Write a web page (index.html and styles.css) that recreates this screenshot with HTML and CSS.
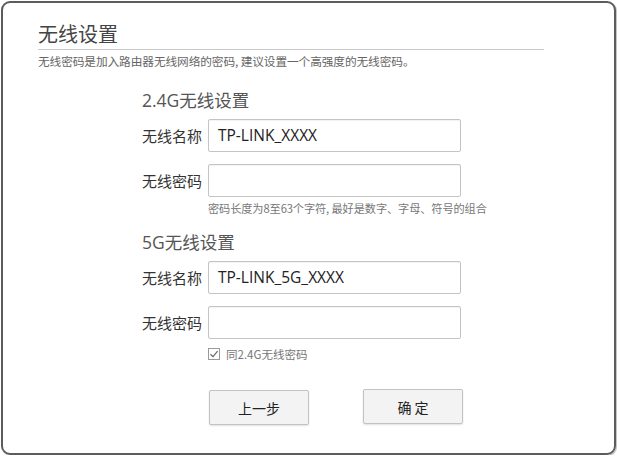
FILE: index.html
```html
<!DOCTYPE html>
<html lang="zh-CN">
<head>
<meta charset="utf-8">
<title>无线设置</title>
<link rel="stylesheet" href="styles.css">
</head>
<body>
<div class="frame">
  <div class="header">
    <h1 class="title">无线设置</h1>
    <p class="desc">无线密码是加入路由器无线网络的密码, 建议设置一个高强度的无线密码。</p>
  </div>
  <div class="form">
    <h2 class="section">2.4G无线设置</h2>
    <div class="row">
      <label class="label">无线名称</label>
      <div class="input">TP-LINK_XXXX</div>
    </div>
    <div class="row">
      <label class="label">无线密码</label>
      <div class="input"></div>
    </div>
    <p class="hint">密码长度为8至63个字符, 最好是数字、字母、符号的组合</p>

    <h2 class="section s5">5G无线设置</h2>
    <div class="row">
      <label class="label">无线名称</label>
      <div class="input">TP-LINK_5G_XXXX</div>
    </div>
    <div class="row">
      <label class="label">无线密码</label>
      <div class="input"></div>
    </div>
    <div class="check">
      <span class="box"><svg width="10" height="10" viewBox="0 0 10 10"><path d="M1.5 5.2 L4 7.6 L8.6 2.2" fill="none" stroke="#666" stroke-width="1.2"/></svg></span>
      <span class="check-text">同2.4G无线密码</span>
    </div>
    <div class="buttons">
      <button class="btn">上一步</button>
      <button class="btn ok">确 定</button>
    </div>
  </div>
</div>
</body>
</html>
```
FILE: styles.css
```css
* { box-sizing: border-box; }
html, body { margin: 0; padding: 0; background: #fff; }
body {
  font-family: "Noto Sans CJK SC", "Noto Sans", sans-serif;
  color: #333;
}
.frame {
  margin: 1px 1px 0 1px;
  width: 615px;
  height: 454px;
  border: 2px solid #5c5c5c;
  border-radius: 9px;
  box-shadow: 1px 1px 1px rgba(0,0,0,0.25);
  padding: 0;
}
.header {
  padding: 18px 0 0 35px;
  width: 541px;
}
.title {
  margin: 0;
  font-size: 20px;
  font-weight: normal;
  color: #444;
  line-height: 26px;
  padding-bottom: 2px;
  border-bottom: 1px solid #c8c8c8;
}
.desc {
  margin: 4px 0 0 0;
  font-size: 11.7px;
  line-height: 14px;
  color: #666;
  letter-spacing: -0.1px;
}
.form {
  padding-left: 139px;
}
.section {
  margin: 21px 0 0 0;
  font-size: 17.5px;
  font-weight: normal;
  color: #555;
  line-height: 22px;
  font-family: "Open Sans", "Noto Sans CJK SC", sans-serif;
}
.section.s5 { margin-top: 16px; }
.row {
  display: flex;
  align-items: center;
  margin-top: 8px;
}
.row + .row { margin-top: 12px; }
.label {
  width: 66px;
  font-size: 15px;
  color: #333;
}
.input {
  width: 253px;
  height: 33px;
  border: 1px solid #c4c4c4;
  border-radius: 2px;
  box-shadow: inset 0 1px 1px rgba(0,0,0,0.05);
  padding: 0 9px;
  font-family: "Open Sans", "Noto Sans", sans-serif;
  font-size: 15.5px;
  line-height: 31px;
  color: #222;
}
.hint {
  margin: 4px 0 0 66px;
  font-size: 11.2px;
  line-height: 14px;
  color: #777;
  letter-spacing: -0.1px;
}
.check {
  display: flex;
  align-items: center;
  margin: 7px 0 0 66px;
  height: 16px;
}
.box {
  width: 12px;
  height: 12px;
  border: 1px solid #999;
  display: flex;
  align-items: center;
  justify-content: center;
  margin-right: 6px;
}
.box svg { display: block; }
.check-text {
  font-size: 11.5px;
  color: #777;
}
.buttons {
  display: flex;
  margin: 28px 0 0 67px;
  gap: 54px;
}
.btn {
  width: 100px;
  height: 35px;
  border: 1px solid #c2c2c2;
  border-radius: 2px;
  background: #f3f3f3;
  box-shadow: 0 1px 2px rgba(0,0,0,0.12);
  font-family: "Noto Sans CJK SC", sans-serif;
  font-size: 14px;
  color: #222;
  padding: 0;
}
.btn.ok { margin-top: -1px; }
```
